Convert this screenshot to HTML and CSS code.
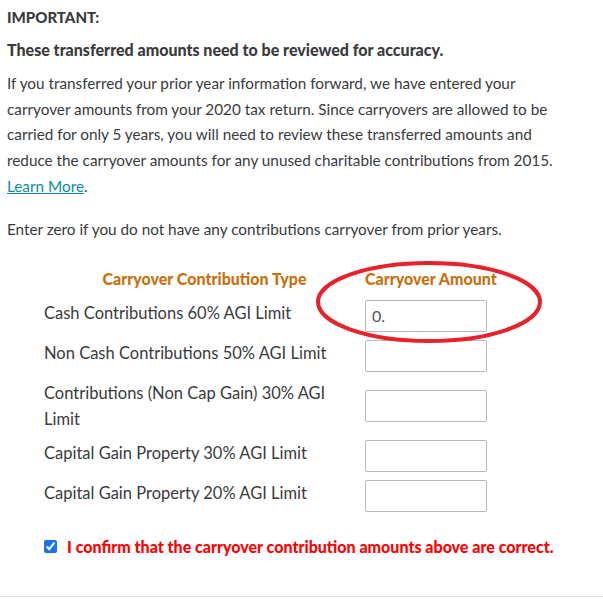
FILE: index.html
```html
<!DOCTYPE html>
<html lang="en">
<head>
  <meta charset="UTF-8" />
  <title>Carryover Contributions</title>
  <link rel="stylesheet" href="styles.css">
</head>
<body>
  <div class="page">
    <h3 class="title">IMPORTANT:</h3>
    <h4 class="subtitle">These transferred amounts need to be reviewed for accuracy.</h4>
    <p class="intro">
      If you transferred your prior year information forward, we have entered your
      carryover amounts from your 2020 tax return. Since carryovers are allowed to be
      carried for only 5 years, you will need to review these transferred amounts and
      reduce the carryover amounts for any unused charitable contributions from 2015.
      <a href="#">Learn More</a>.
    </p>
    <p class="note">Enter zero if you do not have any contributions carryover from prior years.</p>

    <div class="carryover">
      <div class="head-type">Carryover Contribution Type</div>
      <div class="head-amount">Carryover Amount</div>

      <div class="label">Cash Contributions 60% AGI Limit</div>
      <input class="amount" type="text" value="0.">

      <div class="label">Non Cash Contributions 50% AGI Limit</div>
      <input class="amount" type="text">

      <div class="label">Contributions (Non Cap Gain) 30% AGI Limit</div>
      <input class="amount" type="text">

      <div class="label">Capital Gain Property 30% AGI Limit</div>
      <input class="amount" type="text">

      <div class="label">Capital Gain Property 20% AGI Limit</div>
      <input class="amount" type="text">

      <svg class="circle" width="232" height="88" viewBox="0 0 232 88">
        <ellipse cx="116" cy="44" rx="111" ry="39" fill="none" stroke="#e8212b" stroke-width="4"/>
      </svg>
    </div>

    <label class="confirm">
      <input type="checkbox" checked>
      <span>I confirm that the carryover contribution amounts above are correct.</span>
    </label>
  </div>
</body>
</html>
```

FILE: styles.css
```css
* {
  box-sizing: border-box;
  margin: 0;
  padding: 0;
}

body {
  font-family: Lato, 'Open Sans', sans-serif;
  font-size: 15.3px;
  color: #393a3d;
  background: #fff;
}

.page {
  padding: 7px 7px 0;
  height: 597px;
  border-bottom: 1px solid #e3e3e3;
}

.title {
  font-size: 15px;
  font-weight: 900;
  line-height: 20px;
  margin-bottom: 13px;
}

.subtitle {
  font-size: 16px;
  font-weight: 900;
  line-height: 20px;
  margin-bottom: 11px;
}

.intro {
  max-width: 570px;
  line-height: 25.7px;
  margin-bottom: 16px;
}

.intro a {
  color: #0b8aa0;
}

.note {
  line-height: 26px;
  margin-bottom: 27px;
}

.carryover {
  position: relative;
  display: grid;
  grid-template-columns: 321px 122px;
  row-gap: 8px;
  align-items: start;
  padding-left: 37px;
}

.head-type,
.head-amount {
  color: #c96f0c;
  font-weight: 900;
  font-size: 16px;
  line-height: 20px;
  margin-bottom: 3px;
}

.head-type {
  text-align: center;
}

.head-amount {
  white-space: nowrap;
}

.label {
  font-size: 16.5px;
  line-height: 26px;
  padding-right: 26px;
}

.amount {
  align-self: center;
  width: 122px;
  height: 32px;
  border: 1px solid #b8b8b8;
  border-radius: 2px;
  padding: 0 6px;
  font-family: inherit;
  font-size: 16px;
  color: #555;
}

.circle {
  position: absolute;
  left: 306px;
  top: -11px;
  pointer-events: none;
}

.confirm {
  display: flex;
  align-items: center;
  gap: 10px;
  margin: 25px 0 0 37px;
  color: #ff0000;
  font-weight: 900;
  font-size: 16px;
}

.confirm input {
  width: 13px;
  height: 13px;
  accent-color: #1a73e8;
}
```
